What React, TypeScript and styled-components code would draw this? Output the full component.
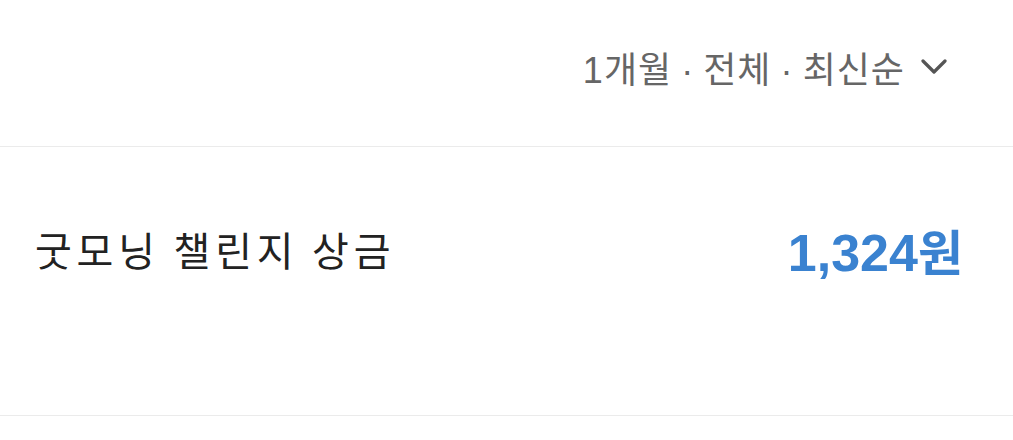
import React from "react";
import styled, { createGlobalStyle } from "styled-components";

const GlobalStyle = createGlobalStyle`
  html, body {
    margin: 0;
    padding: 0;
    background: #ffffff;
  }
  body {
    font-family: "Noto Sans CJK KR", "Noto Sans", sans-serif;
  }
`;

const Page = styled.div`
  width: 1013px;
  background: #fff;
`;

const FilterBar = styled.div`
  height: 147px;
  display: flex;
  align-items: center;
  justify-content: flex-end;
  padding: 0 66px 0 0;
  box-sizing: border-box;
  border-bottom: 1px solid #ebebeb;
`;

const FilterButton = styled.button`
  display: flex;
  align-items: center;
  gap: 16px;
  border: none;
  background: none;
  padding: 0;
  margin-top: -12px;
  font: inherit;
  font-size: 36px;
  letter-spacing: 1px;
  color: #666666;
  cursor: pointer;
`;

const Num = styled.span`
  font-family: "Liberation Sans", "Noto Sans CJK KR", sans-serif;
`;

const Row = styled.div`
  height: 269px;
  display: flex;
  align-items: center;
  justify-content: space-between;
  padding: 0 50px 0 35px;
  box-sizing: border-box;
  border-bottom: 1px solid #ebebeb;
`;

const Label = styled.span`
  font-size: 40px;
  letter-spacing: 4.8px;
  color: #222222;
  margin-top: -64px;
`;

const Amount = styled.span`
  font-size: 52px;
  font-weight: 700;
  color: #3a82d0;
  margin-top: -66px;
`;

const Won = styled.span`
  font-family: "Noto Sans CJK KR", sans-serif;
  font-size: 49px;
`;

const Chevron = () => (
  <svg width="26" height="16" viewBox="0 0 26 16" fill="none">
    <path
      d="M2 2 L13 13 L24 2"
      stroke="#555555"
      strokeWidth="3.2"
      strokeLinecap="round"
      strokeLinejoin="round"
    />
  </svg>
);

export default function App() {
  return (
    <Page>
      <GlobalStyle />
      <FilterBar>
        <FilterButton>
          <span>
            <Num>1</Num>개월 <Num>·</Num> 전체 <Num>·</Num> 최신순
          </span>
          <Chevron />
        </FilterButton>
      </FilterBar>
      <Row>
        <Label>굿모닝 챌린지 상금</Label>
        <Amount>
          <Num>1,324</Num>
          <Won>원</Won>
        </Amount>
      </Row>
    </Page>
  );
}
